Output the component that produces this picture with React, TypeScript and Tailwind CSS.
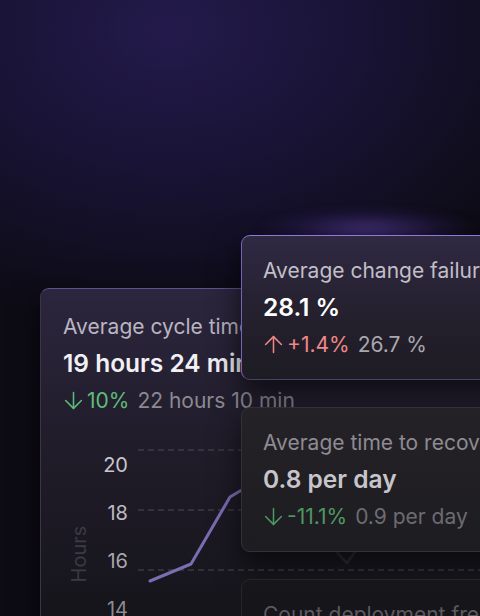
import React from "react";
import { ArrowDown, ArrowUp } from "lucide-react";

const font = { fontFamily: "Inter, 'Noto Sans', sans-serif" };

function Delta({
  dir,
  value,
  rest,
  valueClass,
  restClass,
}: {
  dir: "up" | "down";
  value: string;
  rest: string;
  valueClass: string;
  restClass: string;
}) {
  const Icon = dir === "up" ? ArrowUp : ArrowDown;
  return (
    <div className="flex items-center text-[21px] leading-none whitespace-nowrap">
      <Icon size={27} strokeWidth={1.35} className={`${valueClass} -ml-[3px]`} />
      <span className={valueClass}>{value}</span>
      <span className={`${restClass} ml-[8px]`}>{rest}</span>
    </div>
  );
}

export default function App() {
  return (
    <div
      className="relative w-[480px] h-[616px] overflow-hidden bg-[#0b0a10]"
      style={font}
    >
      {/* background glows */}
      <div className="absolute inset-0 bg-[radial-gradient(ellipse_420px_300px_at_170px_30px,#231a4b_0%,#1a1438_40%,#0d0b14_100%)]" />
      <div className="absolute left-[255px] top-[208px] w-[225px] h-[42px] rounded-full bg-[radial-gradient(ellipse_at_center,rgba(112,80,200,0.5)_0%,rgba(80,55,160,0.18)_45%,transparent_70%)] blur-[5px]" />

      {/* Left card */}
      <div className="absolute left-[40px] top-[288px] w-[480px] h-[360px] rounded-[9px] border border-[#3a3548] border-t-[#5f5290] bg-[linear-gradient(180deg,#2c263e_0%,#211d2b_40%,#141318_100%)] shadow-[0_10px_30px_rgba(0,0,0,0.6)]">
        <div className="pl-[22px] pt-[27px] flex flex-col">
          <div className="text-[21px] leading-none text-[#b9b6c1] whitespace-nowrap">Average cycle time</div>
          <div className="mt-[13.5px] text-[24.5px] leading-none font-semibold text-[#f1f0f4] whitespace-nowrap">19 hours 24 min</div>
          <div className="mt-[12px]">
            <Delta dir="down" value="10%" rest="22 hours 10 min" valueClass="text-[#5cbd78]" restClass="text-[#8c8992]" />
          </div>
        </div>
        {/* chart */}
        <div className="absolute left-0 top-[150px] w-full h-[200px]">
          <svg className="absolute left-0 top-0" width="480" height="200" viewBox="0 0 480 200">
            <g stroke="#3d3b42" strokeWidth="1.3" strokeDasharray="6 4">
              <line x1="97" y1="11" x2="480" y2="11" />
              <line x1="97" y1="71" x2="480" y2="71" />
              <line x1="97" y1="131" x2="480" y2="131" />
            </g>
            <polyline
              points="109,142 150,125 189,58 199,52 240,40 270,80"
              fill="none"
              stroke="#7a6eb2"
              strokeWidth="3"
              strokeLinejoin="round"
              strokeLinecap="round"
            />
            <polyline
              points="270,80 300,118 306,124 316,110 360,70"
              fill="none"
              stroke="#2e2b38"
              strokeWidth="2.5"
              strokeLinejoin="round"
              strokeLinecap="round"
            />
          </svg>
          <div className="absolute left-[28px] top-[80px] w-[20px] h-[70px] flex items-center justify-center">
            <span className="-rotate-90 text-[20px] leading-none text-[#3c3a42] whitespace-nowrap">Hours</span>
          </div>
          <div className="absolute left-[44px] top-[15px] w-[43px] flex flex-col items-end gap-[26px] text-[20px] leading-[22px]">
            <span className="text-[#c9c7cd]">20</span>
            <span className="text-[#bdbbc1]">18</span>
            <span className="text-[#a8a6ac]">16</span>
            <span className="text-[#8d8b91]">14</span>
          </div>
        </div>
      </div>

      {/* Right column of cards */}
      <div className="absolute left-[241px] top-[235px] w-[300px] flex flex-col gap-[27px]">
        <div className="h-[145px] rounded-[9px] border border-[#4a4266] border-t-[#8e7ad8] border-l-[#7563b8] bg-[linear-gradient(180deg,#2f2943_0%,#25212f_50%,#1d1b23_100%)] shadow-[0_12px_30px_rgba(0,0,0,0.65)] pl-[21px] pt-[24px]">
          <div className="text-[21px] leading-none text-[#c2bfc8] whitespace-nowrap">Average change failure rate</div>
          <div className="mt-[13.5px] text-[24.5px] leading-none font-semibold text-white whitespace-nowrap">28.1 %</div>
          <div className="mt-[12px]">
            <Delta dir="up" value="+1.4%" rest="26.7 %" valueClass="text-[#ef8886]" restClass="text-[#aaa7ae]" />
          </div>
        </div>
        <div className="h-[145px] rounded-[9px] border border-[#333137] bg-[linear-gradient(180deg,#242227_0%,#1d1c21_100%)] shadow-[0_12px_30px_rgba(0,0,0,0.6)] pl-[21px] pt-[24px]">
          <div className="text-[21px] leading-none text-[#8e8b93] whitespace-nowrap">Average time to recover</div>
          <div className="mt-[13.5px] text-[24.5px] leading-none font-semibold text-[#c7c5ca] whitespace-nowrap">0.8 per day</div>
          <div className="mt-[12px]">
            <Delta dir="down" value="-11.1%" rest="0.9 per day" valueClass="text-[#4e9863]" restClass="text-[#6d6b71]" />
          </div>
        </div>
        <div className="h-[145px] rounded-[9px] border border-[#26252a] bg-[linear-gradient(180deg,#17161b_0%,#121116_100%)] pl-[21px] pt-[24px]">
          <div className="text-[21px] leading-none text-[#5b5960] whitespace-nowrap">Count deployment frequency</div>
        </div>
      </div>
    </div>
  );
}
